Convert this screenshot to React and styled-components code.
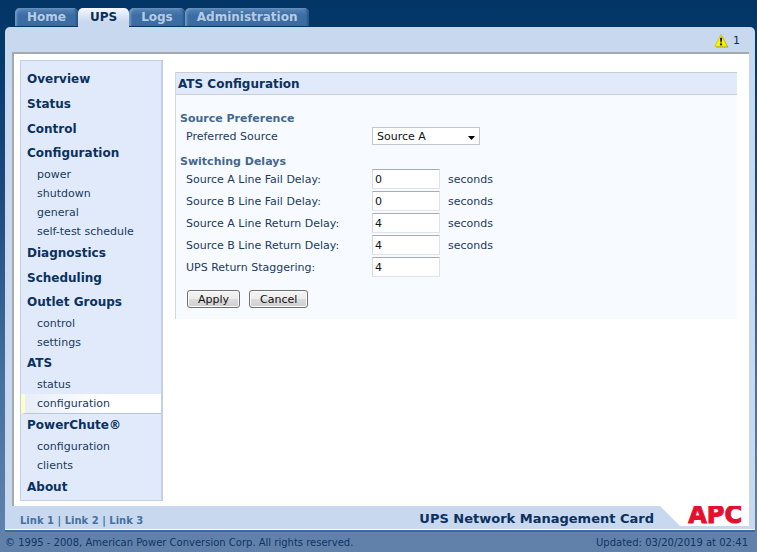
import React from 'react';
import styled, { createGlobalStyle } from 'styled-components';

const tabs = [
    { name: 'Home' },
    { name: 'UPS', active: true },
    { name: 'Logs' },
    { name: 'Administration' },
];

const menu = [
    { name: 'Overview' },
    { name: 'Status' },
    { name: 'Control' },
    { name: 'Configuration', items: ['power', 'shutdown', 'general', 'self-test schedule'] },
    { name: 'Diagnostics' },
    { name: 'Scheduling' },
    { name: 'Outlet Groups', items: ['control', 'settings'] },
    { name: 'ATS', items: ['status', 'configuration'], current: 'configuration' },
    { name: 'PowerChute®', items: ['configuration', 'clients'] },
    { name: 'About' },
];

const delays = [
    { id: 'failA', label: 'Source A Line Fail Delay:', value: '0', unit: 'seconds' },
    { id: 'failB', label: 'Source B Line Fail Delay:', value: '0', unit: 'seconds' },
    { id: 'returnA', label: 'Source A Line Return Delay:', value: '4', unit: 'seconds' },
    { id: 'returnB', label: 'Source B Line Return Delay:', value: '4', unit: 'seconds' },
    { id: 'stagger', label: 'UPS Return Staggering:', value: '4' },
];

function WarningIcon() {
    return (
        <svg width="15" height="14" viewBox="0 0 15 14" aria-hidden="true">
            <path d="M8 1.6 L14.4 13.4 H2 Z" fill="#9a9a8c" />
            <path d="M7 .6 L13.2 12.4 H.8 Z" fill="#fff200" stroke="#c9c400" strokeWidth=".8" strokeLinejoin="round" />
            <path d="M6 3.8 H8.2 L7.7 8.6 H6.5 Z" fill="#111" />
            <rect x="6.1" y="9.5" width="2" height="1.8" fill="#111" />
        </svg>
    );
}

function Menu() {
    return (
        <Sidebar>
            {menu.map((group) => (
                <div key={group.name}>
                    <MenuHeading href="#" $open={!!group.items}>{group.name}</MenuHeading>
                    {group.items && group.items.map((item) => (
                        <MenuItem href="#" key={item} $current={item === group.current}>{item}</MenuItem>
                    ))}
                </div>
            ))}
        </Sidebar>
    );
}

function AtsForm() {
    return (
        <Card>
            <CardTitle>ATS Configuration</CardTitle>
            <Form onSubmit={(e) => e.preventDefault()}>
                <Section>
                    <SectionTitle>Source Preference</SectionTitle>
                    <Field>
                        <label htmlFor="source">Preferred Source</label>
                        <SelectBox>
                            <Select id="source" defaultValue="a">
                                <option value="a">Source A</option>
                                <option value="b">Source B</option>
                            </Select>
                            <svg width="7" height="4" viewBox="0 0 7 4" aria-hidden="true">
                                <path d="M0 0 H7 L3.5 4 Z" fill="#000" />
                            </svg>
                        </SelectBox>
                    </Field>
                </Section>
                <Section>
                    <SectionTitle>Switching Delays</SectionTitle>
                    {delays.map((d) => (
                        <Field key={d.id}>
                            <label htmlFor={d.id}>{d.label}</label>
                            <TextInput id={d.id} type="text" defaultValue={d.value} />
                            {d.unit && <span>{d.unit}</span>}
                        </Field>
                    ))}
                </Section>
                <Actions>
                    <Button type="submit">Apply</Button>
                    <Button type="reset">Cancel</Button>
                </Actions>
            </Form>
        </Card>
    );
}

function App() {
    return (
        <Page>
            <GlobalStyle />
            <Tabs>
                {tabs.map((tab) => (
                    <Tab href="#" key={tab.name} $active={tab.active}>{tab.name}</Tab>
                ))}
            </Tabs>
            <Shell>
                <StatusBar>
                    <WarningIcon />
                    <span>1</span>
                </StatusBar>
                <Panel>
                    <Menu />
                    <AtsForm />
                </Panel>
                <BottomBar>
                    <Links>
                        <a href="#">Link 1</a> | <a href="#">Link 2</a> | <a href="#">Link 3</a>
                    </Links>
                    <Product>UPS Network Management Card</Product>
                    <LogoCorner>
                        <Logo>APC</Logo>
                    </LogoCorner>
                </BottomBar>
            </Shell>
            <Legal>
                <span>© 1995 - 2008, American Power Conversion Corp. All rights reserved.</span>
                <span>Updated: 03/20/2019 at 02:41</span>
            </Legal>
        </Page>
    );
}

export default App;

const GlobalStyle = createGlobalStyle`
    * {
        box-sizing: border-box;
    }

    body {
        margin: 0;
        min-height: 100vh;
        background: #6181ab linear-gradient(#033667 0, #04396c 60px, #1d4b80 200px, #44709f 380px, #6181ab 530px) no-repeat;
        font-family: "DejaVu Sans", Verdana, sans-serif;
        font-size: 11px;
        color: #1b3a5c;
    }

    a {
        color: inherit;
        text-decoration: none;
    }
`;

const Page = styled.div`
    padding: 8px 2px 0 5px;
`;

const Tabs = styled.nav`
    display: flex;
    align-items: flex-start;
    padding-left: 10px;
    height: 19px;
`;

const Tab = styled.a`
    height: ${(p) => (p.$active ? 19 : 18)}px;
    padding: 0 12px;
    line-height: 18px;
    border-radius: 5px 5px 0 0;
    font-size: 12px;
    font-weight: bold;
    color: ${(p) => (p.$active ? '#0b2d57' : '#b9cbe0')};
    background: ${(p) => (p.$active
        ? 'linear-gradient(#f4f8ff, #c8d8ef 75%)'
        : 'linear-gradient(#5a86b6, #3b6ea6 40%, #3b6ca2)')};
    box-shadow: ${(p) => (p.$active ? 'none' : 'inset 2px 1px 2px #6f97c2, inset -2px 0 2px #2a5688')};
`;

const Shell = styled.div`
    background: #c8d8ef;
    border-radius: 5px 5px 0 0;
    border-bottom: 1px solid #fff;
`;

const StatusBar = styled.div`
    display: flex;
    align-items: center;
    justify-content: flex-end;
    gap: 4px;
    height: 25px;
    padding: 2px 15px 0 0;
    color: #0b2d57;
`;

const Panel = styled.main`
    display: flex;
    align-items: flex-start;
    gap: 12px;
    margin: 0 6px 0 7px;
    padding: 6px 12px 5px 6px;
    background: #fff;
    border: solid #a5a8ac;
    border-width: 2px 0 0 2px;
`;

const Sidebar = styled.nav`
    flex: none;
    width: 143px;
    padding: 6px 0 0;
    background: #e0eafb;
    border: 1px solid #c3d0e4;
    border-right-width: 2px;
`;

const MenuHeading = styled.a`
    display: block;
    padding-left: 6px;
    line-height: ${(p) => (p.$open ? 23 : 25)}px;
    font-size: 12px;
    font-weight: bold;
    color: #0b315e;
`;

const MenuItem = styled.a`
    display: block;
    padding-left: ${(p) => (p.$current ? 12 : 16)}px;
    line-height: 19px;
    ${(p) => p.$current && `
        background: linear-gradient(to right, #e8eef8, #fff 60%);
        border-left: 4px solid #fdffc8;
        border-bottom: 1px solid #b9c6da;
    `}
`;

const Card = styled.section`
    flex: 1;
    margin-top: 12px;
    background: #f7fbff;
    border-left: 1px solid #d3d9e2;
`;

const CardTitle = styled.h1`
    margin: 0;
    padding: 2px 0 0 2px;
    line-height: 19px;
    font-size: 12px;
    color: #0b315e;
    background: #e0eafb;
    border: solid #c9ced6;
    border-width: 1px 0;
`;

const Form = styled.form`
    padding: 15px 4px 11px;
`;

const Section = styled.div`
    margin-bottom: 6px;
`;

const SectionTitle = styled.h2`
    margin: 0;
    padding-top: 2px;
    line-height: 13px;
    font-size: 11px;
    color: #44688f;
`;

const Field = styled.div`
    display: grid;
    grid-template-columns: 178px 68px 1fr;
    column-gap: 8px;
    align-items: center;
    height: 22px;
    padding-left: 6px;
`;

const SelectBox = styled.div`
    position: relative;
    width: 108px;

    svg {
        position: absolute;
        right: 5px;
        top: 9px;
        pointer-events: none;
    }
`;

const Select = styled.select`
    display: block;
    appearance: none;
    width: 100%;
    height: 18px;
    padding: 0 4px;
    font: inherit;
    color: #111;
    background: #fff;
    border: 1px solid #c3c7cd;
    border-radius: 0;
`;

const TextInput = styled.input`
    width: 100%;
    height: 20px;
    padding: 0 2px;
    font: inherit;
    color: #111;
    background: #fff;
    border: 1px solid #dfe3ea;
    border-top-color: #a9abb3;
    border-left-color: #d5d9e0;
    border-radius: 1px;
`;

const Actions = styled.div`
    display: flex;
    gap: 9px;
    margin-top: 12px;
    padding-left: 7px;
`;

const Button = styled.button`
    height: 18px;
    padding: 0 10px;
    font: inherit;
    color: #111;
    background: linear-gradient(#f3f3f3, #ececec 50%, #dcdcdc 50%, #cfcfcf);
    border: 1px solid #707070;
    border-radius: 3px;
    box-shadow: inset 0 0 0 1px #fafafa;
`;

const BottomBar = styled.footer`
    display: flex;
    align-items: stretch;
    height: 23px;
    padding: 0 6px 3px 15px;
    font-weight: bold;
`;

const Links = styled.div`
    flex: 1;
    line-height: 29px;
    font-size: 10px;
    color: #44719f;
`;

const Product = styled.div`
    line-height: 25px;
    font-size: 13px;
    color: #0b315e;
`;

const LogoCorner = styled.div`
    display: flex;
    justify-content: flex-end;
    width: 92px;
    margin-left: 3px;
    padding-right: 7px;
    background: #fff;
    clip-path: polygon(3px 0, 100% 0, 100% 100%, 23px 100%);
`;

const Logo = styled.span`
    line-height: 18px;
    font-size: 24px;
    color: #e2122f;
    -webkit-text-stroke: 1px #e2122f;
`;

const Legal = styled.footer`
    display: flex;
    justify-content: space-between;
    padding: 0 7px 0 0;
    border-top: 2px solid #3b6a9c;
    line-height: 21px;
    font-size: 10px;
    color: #0d3566;
`;
